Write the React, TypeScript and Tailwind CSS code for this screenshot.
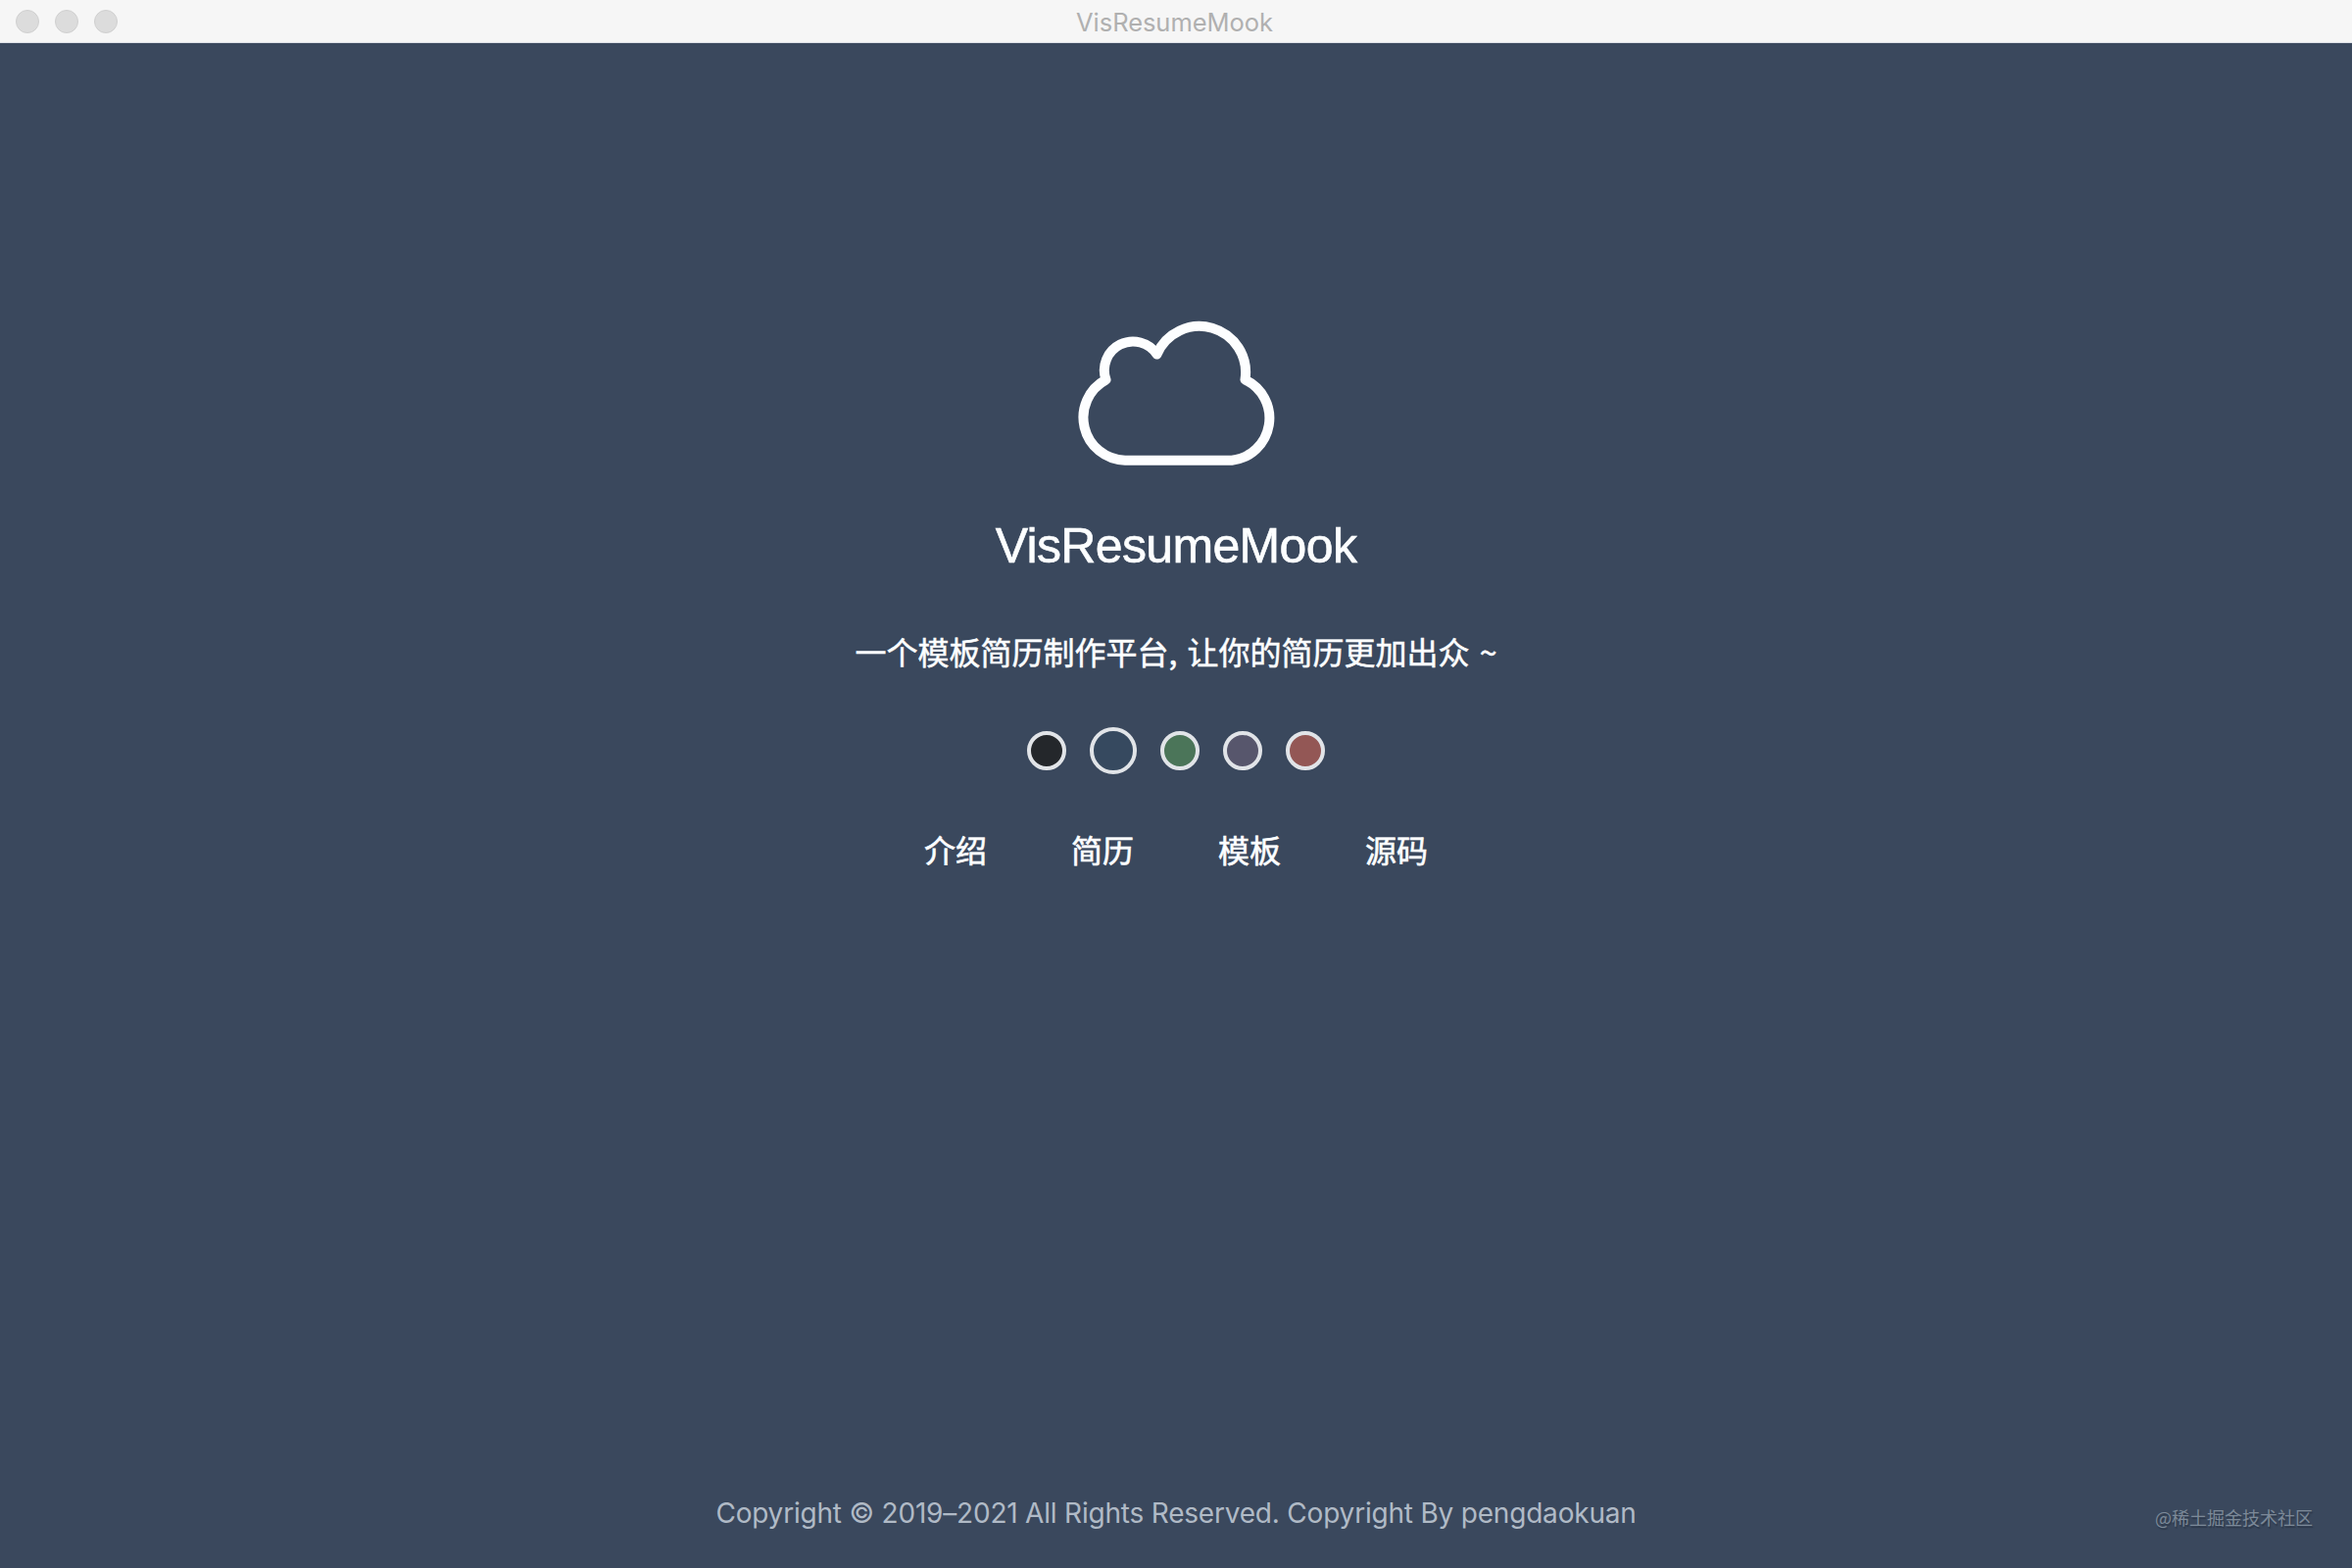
const themes = [
  { fill: 'bg-[#24272b]', size: 'size-10' },
  { fill: 'bg-[#36495f]', size: 'size-12' },
  { fill: 'bg-[#4b7559]', size: 'size-10' },
  { fill: 'bg-[#57566c]', size: 'size-10' },
  { fill: 'bg-[#935755]', size: 'size-10' },
];

const links = ['介绍', '简历', '模板', '源码'];

function TitleBar() {
  return (
    <header className="grid h-11 shrink-0 grid-cols-3 items-center border-b border-[#dcdfe6] bg-[#f6f6f6] px-4">
      <div className="flex gap-4">
        <span className="size-6 rounded-full border border-[#d0d0d0] bg-[#dcdcdc]" />
        <span className="size-6 rounded-full border border-[#d0d0d0] bg-[#dcdcdc]" />
        <span className="size-6 rounded-full border border-[#d0d0d0] bg-[#dcdcdc]" />
      </div>
      <div className="pt-[2px] text-center font-['Inter',sans-serif] text-[25.5px] leading-8 tracking-[-0.05px] text-[#b0b0b0]">
        <span className="-ml-[3px]">VisResumeMook</span>
      </div>
    </header>
  );
}

function CloudLogo() {
  return (
    <svg width="240" height="180" viewBox="0 0 240 180" fill="none" stroke="#fdfeff" strokeWidth="10" strokeLinejoin="round">
      <path d="M68 159.7A43.7 43.7 0 0 1 48.5 77.5A29.3 29.3 0 0 1 100.5 51.5A47.2 47.2 0 0 1 190.5 77.5A43.3 43.3 0 0 1 177 159.7Z" />
    </svg>
  );
}

export default function App() {
  return (
    <div className="flex h-[1600px] w-[2400px] flex-col overflow-hidden bg-[#3a485d] font-['Liberation_Sans','Noto_Sans_CJK_SC',sans-serif] text-[#fcfeff]">
      <TitleBar />
      <main className="relative flex flex-1 flex-col items-center pt-[266px]">
        <CloudLogo />
        <h1 className="mt-[35px] text-[50px] leading-[64px] tracking-[-0.65px] [-webkit-text-stroke:0.6px_#fcfeff]">VisResumeMook</h1>
        <p className="mt-[51px] font-['Noto_Sans_CJK_SC',sans-serif] text-[32px] leading-[48px] [word-spacing:3px] [-webkit-text-stroke:0.5px_#fcfeff]">
          一个模板简历制作平台, 让你的简历更加出众 ~
        </p>
        <div className="mt-[54px] flex h-12 items-center gap-6">
          {themes.map((t) => (
            <span key={t.fill} className={`${t.size} ${t.fill} rounded-full border-4 border-[#e1e4e8]`} />
          ))}
        </div>
        <nav className="mt-[52px] flex gap-[86px] font-['Noto_Sans_CJK_SC',sans-serif] text-[32px] leading-[48px] [-webkit-text-stroke:0.6px_#fcfeff]">
          {links.map((l) => (
            <a key={l}>{l}</a>
          ))}
        </nav>
        <footer className="mt-auto mb-9 font-['Inter',sans-serif] text-[28px] leading-10 tracking-[-0.2px] text-[#b0bac6]">
          Copyright © 2019–2021 All Rights Reserved. Copyright By pengdaokuan
        </footer>
        <span className="absolute right-10 bottom-[38px] font-['Noto_Sans_CJK_SC',sans-serif] text-[18px] leading-7 text-[#7c8998] [text-shadow:1px_2px_1px_#2c384a]">
          @稀土掘金技术社区
        </span>
      </main>
    </div>
  );
}
